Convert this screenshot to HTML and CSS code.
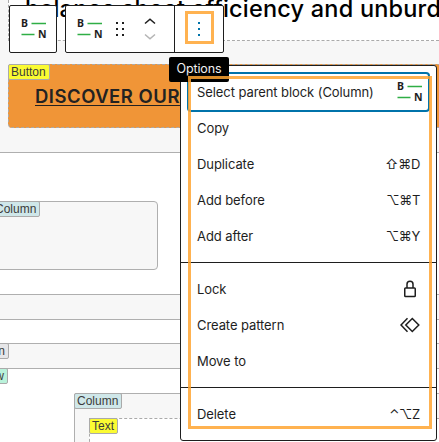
FILE: index.html
```html
<!DOCTYPE html>
<html lang="en">
<head>
<meta charset="utf-8">
<title>Block editor</title>
<link rel="stylesheet" href="styles.css">
</head>
<body>
<svg class="defs" width="0" height="0">
  <symbol id="bn" viewBox="0 0 26 20">
    <text x="0" y="8" font-size="10.5" font-weight="700" fill="#1e1e1e">B</text>
    <text x="17" y="19" font-size="10.5" font-weight="700" fill="#1e1e1e">N</text>
    <path d="M10.500 4.500H25M.5 15.500H13.500" stroke="#2fae45" stroke-width="1.300"/>
  </symbol>
</svg>
<main class="canvas">
  <section class="intro">
    <h2 class="heading">balance sheet efficiency and unburd</h2>
    <div class="button-block"><span class="tag yellow">Button</span><a class="cta">DISCOVER OUR</a></div>
  </section>
  <section class="columns">
    <div class="column"><span class="tag teal">Column</span></div>
  </section>
  <div class="band"></div>
  <div class="gap"></div>
  <div class="band second"><span class="tag gray">Column</span></div>
  <section class="row">
    <span class="tag green">Row</span>
    <div class="nested"><span class="tag teal">Column</span>
      <div class="text-block"><span class="tag yellow">Text</span></div>
    </div>
  </section>
</main>
<div class="toolbars">
  <div class="toolbar parent"><svg class="bn"><use href="#bn"/></svg></div>
  <div class="toolbar block">
    <svg class="bn"><use href="#bn"/></svg>
    <svg class="drag" width="10" height="16" viewBox="0 0 10 16" fill="#1e1e1e"><path d="M1 1h2v2H1zM7 1h2v2H7zM1 7h2v2H1zM7 7h2v2H7zM1 13h2v2H1zM7 13h2v2H7z"/></svg>
    <svg class="movers" width="12" height="24" viewBox="0 0 12 24" fill="none" stroke-width="1.500"><path d="M1 6.500l5-4.300 5 4.300" stroke="#1e1e1e"/><path d="M1 17.500l5 4.300 5-4.300" stroke="#b4b4b4"/></svg>
    <div class="options"><svg width="2" height="14" viewBox="0 0 2 14" fill="#0073aa"><path d="M0 0h2v2H0zM0 6h2v2H0zM0 12h2v2H0z"/></svg></div>
  </div>
</div>
<div class="menu">
  <div class="group">
    <div class="item focused"><span>Select parent block (Column)</span><svg class="bn"><use href="#bn"/></svg></div>
    <div class="item"><span>Copy</span></div>
    <div class="item"><span>Duplicate</span><kbd>⇧⌘D</kbd></div>
    <div class="item"><span>Add before</span><kbd>⌥⌘T</kbd></div>
    <div class="item"><span>Add after</span><kbd>⌥⌘Y</kbd></div>
  </div>
  <div class="group">
    <div class="item"><span>Lock</span><svg class="lock" width="14" height="18" viewBox="0 0 14 18" fill="none" stroke="#1e1e1e" stroke-width="1.500"><rect x="1.750" y="8" width="10.500" height="8.500" rx=".8"/><path d="M4 8V4.200a3 3 0 0 1 6 0V8"/></svg></div>
    <div class="item"><span>Create pattern</span><svg width="20" height="16" viewBox="0 0 20 16" fill="none" stroke="#1e1e1e" stroke-width="1.500"><path d="M12.300 1.500l6.500 6.500-6.500 6.500L5.800 8zM7.500 1.300L1 8l6.500 6.700"/></svg></div>
    <div class="item"><span>Move to</span></div>
  </div>
  <div class="group">
    <div class="item"><span>Delete</span><kbd>⌃⌥Z</kbd></div>
  </div>
</div>
<div class="tooltip">Options</div>
<div class="frame menu-frame"></div>
<div class="frame options-frame"></div>
</body>
</html>
```
FILE: styles.css
```css
* { box-sizing: border-box; }
body {
  margin: 0;
  width: 439px;
  height: 442px;
  overflow: hidden;
  position: relative;
  background: #fff;
  color: #1e1e1e;
  font: 13px/16px Inter, "Liberation Sans", sans-serif;
}
.defs { position: absolute; }
.canvas { height: 442px; overflow: hidden; }
.intro { height: 153px; padding-left: 8px; background: #f7f7f7; border-bottom: 1px solid #afafaf; }
.heading {
  margin: 0;
  height: 41px;
  padding-left: 16px;
  background: #fff;
  border-left: 1px dashed #aaa;
  border-bottom: 1px dashed #aaa;
  color: #000;
  font: 500 23.500px/18px Inter, sans-serif;
  letter-spacing: .2px;
  white-space: nowrap;
}
.button-block {
  position: relative;
  height: 64px;
  margin-top: 23px;
  padding: 20px 0 0 26px;
  background: #f09537;
  border: 1px dashed #aaa;
  border-right: 0;
  border-radius: 4px 0 0 4px;
}
.cta {
  font: 600 18.500px/22px Inter, sans-serif;
  letter-spacing: .5px;
  color: #222;
  white-space: nowrap;
  text-decoration: underline;
  text-decoration-thickness: 1px;
  text-underline-offset: 2px;
}
.tag {
  position: absolute;
  top: -1px;
  left: -1px;
  height: 16px;
  padding: 0 3px 0 2px;
  border: 1px solid #aaa;
  border-radius: 2px;
  font: 12px/14px "Liberation Sans", sans-serif;
  color: #3b3b3b;
}
.yellow { background: #fbfb32; }
.teal { background: #cfe7e9; }
.gray { background: #e6e6e8; left: auto; right: 430px; top: -1px; }
.green { background: #b9f2da; left: auto; right: 431px; }
.columns { height: 141px; padding-top: 48px; }
.column {
  position: relative;
  width: 168px;
  height: 69px;
  margin-left: -10px;
  background: #f7f7f7;
  border: 1px solid #afafaf;
  border-radius: 4px;
}
.column .tag { left: 1px; }
.band { position: relative; height: 26px; background: #f7f7f7; border: solid #afafaf; border-width: 1px 0; }
.gap { height: 23px; }
.row { position: relative; padding: 24px 0 0 74px; }
.nested {
  position: relative;
  height: 80px;
  padding: 24px 0 0 14px;
  background: #f7f7f7;
  border: 1px solid #afafaf;
  border-right: 0;
  border-radius: 3px 0 0;
}
.text-block { position: relative; height: 50px; background: #fff; border: 1px dashed #aaa; border-right: 0; }
.toolbars { position: absolute; left: 9px; top: 5px; display: flex; gap: 8px; }
.toolbar {
  display: flex;
  align-items: center;
  height: 48px;
  background: #fff;
  border: 1px solid #1e1e1e;
  border-radius: 2px;
  padding-left: 11px;
}
.parent { width: 48px; }
.block { width: 159px; }
.bn { width: 26px; height: 20px; flex: none; font-family: "Noto Sans", sans-serif; }
.drag { margin-left: 12px; }
.movers { margin-left: 19px; }
.options {
  display: flex;
  align-items: center;
  justify-content: center;
  height: 46px;
  flex: 1;
  margin-left: 18px;
  border-left: 1px solid #1e1e1e;
}
.menu {
  position: absolute;
  left: 180px;
  top: 65px;
  width: 257px;
  background: #fff;
  border: 1px solid #1e1e1e;
  border-radius: 3px;
}
.group { padding: 8px; }
.group + .group { border-top: 1px solid #1e1e1e; }
.item { display: flex; align-items: center; justify-content: space-between; height: 36px; padding: 0 8px; }
.focused { border-radius: 2px; box-shadow: 0 0 0 2px #0073aa; padding-right: 5px; }
.item span { white-space: nowrap; letter-spacing: -.08px; }
.item kbd { font: 13px/16px Inter, "DejaVu Sans", sans-serif; letter-spacing: -.3px; }
.lock { margin-right: 3px; }
.tooltip {
  position: absolute;
  left: 169px;
  top: 57px;
  width: 60px;
  height: 25px;
  border-radius: 2px;
  background: #000;
  color: #f0f0f0;
  font-size: 12.500px;
  letter-spacing: -.1px;
  line-height: 24px;
  text-align: center;
}
.frame { position: absolute; border: 3px solid rgba(255, 164, 49, .85); }
.menu-frame { left: 188px; top: 76px; width: 244px; height: 353px; }
.options-frame { left: 185px; top: 11px; width: 29px; height: 33px; }
```
